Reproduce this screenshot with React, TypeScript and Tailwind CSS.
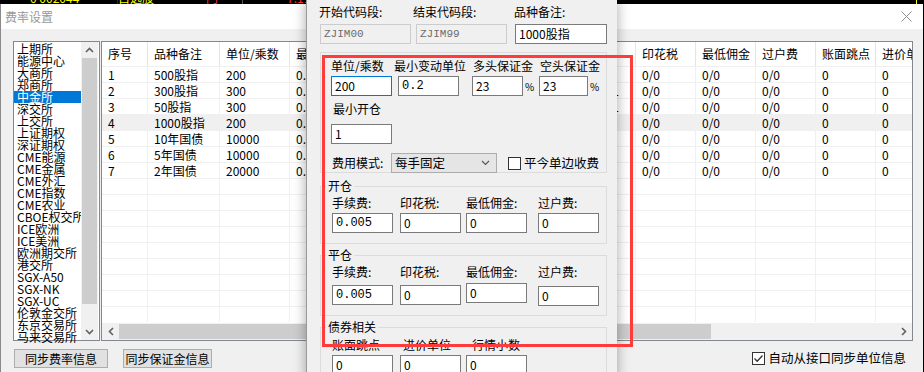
import React from 'react';

const exchanges = [
  '上期所', '能源中心', '大商所', '郑商所', '中金所', '深交所', '上交所', '上证期权', '深证期权',
  'CME能源', 'CME金属', 'CME外汇', 'CME指数', 'CME农业', 'CBOE权交所', 'ICE欧洲', 'ICE美洲',
  '欧洲期交所', '港交所', 'SGX-A50', 'SGX-NK', 'SGX-UC', '伦敦金交所', '东京交易所', '马来交易所',
];

// columns 5-8 sit under the edit dialog, only their edges show
const columns: { title: string; w: number }[] = [
  { title: '序号', w: 46 },
  { title: '品种备注', w: 72 },
  { title: '单位/乘数', w: 70 },
  { title: '最小变动', w: 60 },
  { title: '多头', w: 70 },
  { title: '空头', w: 70 },
  { title: '开仓', w: 73 },
  { title: '平仓', w: 73 },
  { title: '印花税', w: 60 },
  { title: '最低佣金', w: 60 },
  { title: '过户费', w: 60 },
  { title: '账面跳点', w: 60 },
  { title: '进价单位', w: 60 },
];

const rows: string[][] = [
  ['1', '500股指', '200', '0.2', '23%', '23%', '0.23', '0.23', '0/0', '0/0', '0/0', '0', '0'],
  ['2', '300股指', '300', '0.2', '12%', '12%', '0.23', '0.000231', '0/0', '0/0', '0/0', '0', '0'],
  ['3', '50股指', '300', '0.2', '12%', '12%', '0.23', '0.000231', '0/0', '0/0', '0/0', '0', '0'],
  ['4', '1000股指', '200', '0.2', '23%', '23%', '0.23', '0.23', '0/0', '0/0', '0/0', '0', '0'],
  ['5', '10年国债', '10000', '0.005', '2%', '2%', '3', '3', '0/0', '0/0', '0/0', '0', '0'],
  ['6', '5年国债', '10000', '0.005', '1.2%', '1.2%', '3', '3', '0/0', '0/0', '0/0', '0', '0'],
  ['7', '2年国债', '20000', '0.005', '0.5%', '0.5%', '3', '3', '0/0', '0/0', '0/0', '0', '0'],
];

const Input = ({ value, w, mono, className = '' }: { value: string; w: number; mono?: boolean; className?: string }) => (
  <div
    className={`h-[20px] bg-white border border-[#7a7a7a] pl-[3px] flex items-center text-[12px] text-black ${mono ? 'font-["Liberation_Mono","Noto_Sans_CJK_SC",monospace]' : ''} ${className}`}
    style={{ width: w }}
  >
    {value}
  </div>
);

const Group = ({ title, className, children }: { title?: string; className: string; children: React.ReactNode }) => (
  <div className={`relative ml-[1px] w-[287px] border border-[#dcdcdc] ${className}`}>
    {title && (
      <span className="absolute left-[5px] top-[-8px] px-[2px] bg-[#f0f0f0] text-[12px] leading-[14px]">{title}</span>
    )}
    {children}
  </div>
);

const FeeRow = ({ vals, offsets }: { vals: string[]; offsets: number[] }) => (
  <div className="flex items-start">
    {vals.map((v, i) => (
      <div key={i} style={{ width: i === 3 ? 61 : [68, 66, 72][i], marginTop: offsets[i] }}>
        <Input value={v} w={61} mono={v.includes('.')} />
      </div>
    ))}
  </div>
);

export default function App() {
  return (
    <div className='relative w-[924px] h-[372px] overflow-hidden bg-black font-["Noto_Sans_CJK_SC","Noto_Sans",sans-serif] text-black'>
      {/* desktop strip behind */}
      <div className="h-[4px] relative overflow-hidden text-[12px] leading-[12px]">
        <span className="absolute left-[30px] top-[-8px] text-[#ffff00]">0 002044</span>
        <span className="absolute left-[118px] top-[-8px] text-[#ffff00]">自选股</span>
        <span className="absolute left-[117px] top-0 w-px h-[4px] bg-[#8b0000]" />
        <span className="absolute left-[206px] top-[-8px] text-[#ff3030]">门</span>
        <span className="absolute left-[287px] top-[-8px] text-[#ff3030]">7.11</span>
        <span className="absolute left-[242px] top-0 w-px h-[4px] bg-[#555]" />
        <span className="absolute left-[405px] top-[-8px] text-[#00ff00]">30</span>
        <span className="absolute left-[916px] top-0 w-px h-[4px] bg-[#ffff00]" />
      </div>

      {/* main window */}
      <div className="w-[923px] h-[368px] bg-[#f0f0f0] border-l border-[#8a8a8a] flex flex-col">
        <div className="h-[25px] bg-white flex items-center justify-between pl-[4px] pr-[10px]">
          <span className="text-[12px] text-[#999999]">费率设置</span>
          <svg width="11" height="11" viewBox="0 0 11 11" className="mr-[1px]">
            <path d="M0.5 0.5 L10.5 10.5 M10.5 0.5 L0.5 10.5" stroke="#8c8c8c" strokeWidth="1" />
          </svg>
        </div>

        <div className="flex pl-[12px] pt-[12px] gap-[1px]">
          {/* exchange list */}
          <div className="w-[87px] h-[300px] border border-[#828790] bg-white flex">
            <div className="w-[67px] text-[12px] leading-[12px] pt-[1px]">
              {exchanges.map((e, i) => (
                <div
                  key={e}
                  className={`h-[12px] pl-[3px] whitespace-nowrap overflow-visible ${i === 4 ? 'bg-[#0078d7] text-white' : ''}`}
                >
                  {e}
                </div>
              ))}
            </div>
            <div className="w-[17px] bg-[#f0f0f0] flex flex-col items-center">
              <div className="h-[16px] flex items-center justify-center">
                <svg width="9" height="6" viewBox="0 0 9 6"><path d="M1 5 L4.5 1.5 L8 5" stroke="#606060" strokeWidth="1.6" fill="none" /></svg>
              </div>
              <div className="w-[15px] flex-1 bg-[#cdcdcd] mb-[20px]" />
              <div className="h-[16px] flex items-center justify-center">
                <svg width="9" height="6" viewBox="0 0 9 6"><path d="M1 1 L4.5 4.5 L8 1" stroke="#606060" strokeWidth="1.6" fill="none" /></svg>
              </div>
            </div>
          </div>

          {/* rate table */}
          <div className="w-[812px] h-[300px] border border-[#828790] bg-white flex flex-col overflow-hidden">
            <div className="flex-1 overflow-hidden text-[12px]">
              <div className="flex h-[24px]">
                {columns.map(c => (
                  <div key={c.title} className="shrink-0 pl-[6px] flex items-center border-r border-[#e5e5e5] whitespace-nowrap overflow-hidden" style={{ width: c.w }}>
                    {c.title}
                  </div>
                ))}
              </div>
              {Array.from({ length: 16 }).map((_, r) => (
                <div key={r} className={`flex h-[16px] border-t border-[#f0f0f0] ${r === 3 ? 'bg-[#f0f0f0]' : ''}`}>
                  {columns.map((c, ci) => (
                    <div key={ci} className="shrink-0 pl-[6px] leading-[15px] border-r border-[#f0f0f0] whitespace-nowrap overflow-hidden" style={{ width: c.w }}>
                      {rows[r] ? rows[r][ci] : ''}
                    </div>
                  ))}
                </div>
              ))}
            </div>
            <div className="h-[17px] bg-[#f0f0f0] flex items-center">
              <div className="w-[17px] flex justify-center">
                <svg width="6" height="9" viewBox="0 0 6 9"><path d="M5 1 L1.5 4.5 L5 8" stroke="#606060" strokeWidth="1.6" fill="none" /></svg>
              </div>
              <div className="w-[592px] h-[15px] bg-[#cdcdcd]" />
              <div className="flex-1" />
              <div className="w-[17px] flex justify-center">
                <svg width="6" height="9" viewBox="0 0 6 9"><path d="M1 1 L4.5 4.5 L1 8" stroke="#606060" strokeWidth="1.6" fill="none" /></svg>
              </div>
            </div>
          </div>
        </div>

        <div className="flex items-center pl-[13px] pr-[17px] mt-[8px] text-[12px]">
          <button className="w-[94px] h-[19px] bg-[#e1e1e1] border border-[#adadad] leading-[17px]">同步费率信息</button>
          <button className="ml-[15px] w-[89px] h-[19px] bg-[#e1e1e1] border border-[#adadad] leading-[17px]">同步保证金信息</button>
          <div className="ml-auto flex items-center gap-[3px]">
            <div className="w-[13px] h-[13px] border border-[#333] bg-white flex items-center justify-center">
              <svg width="11" height="11" viewBox="0 0 11 11"><path d="M1.5 5.5 L4.2 8.2 L9.5 2.5" stroke="#333" strokeWidth="1.3" fill="none" /></svg>
            </div>
            <span className="text-[12.5px]">自动从接口同步单位信息</span>
          </div>
        </div>
      </div>

      {/* foreground dialog */}
      <div className="absolute left-[306px] top-0 w-[311px] h-[380px] bg-[#f0f0f0] border-l border-[#9a9a9a] shadow-[0_0_12px_rgba(0,0,0,0.35)] pl-[12px] pt-[5px] text-[12px]">
        <div className="flex h-[14px] leading-[14px]">
          <span className="w-[94px]">开始代码段:</span>
          <span className="w-[101px]">结束代码段:</span>
          <span>品种备注:</span>
        </div>
        <div className="flex mt-[5px] ml-[1px]">
          <div className='w-[91px] h-[20px] border border-[#cccccc] bg-[#f0f0f0] pl-[3px] flex items-center text-[#6d6d6d] font-["Liberation_Mono",monospace] text-[11px]'>ZJIM00</div>
          <div className='ml-[5px] w-[91px] h-[20px] border border-[#cccccc] bg-[#f0f0f0] pl-[3px] flex items-center text-[#6d6d6d] font-["Liberation_Mono",monospace] text-[11px]'>ZJIM99</div>
          <Input value="1000股指" w={92} className="ml-[8px]" />
        </div>

        <Group className="mt-[8px] h-[121px] pl-[10px] pt-[6px]">
          <div className="flex h-[14px] leading-[14px] whitespace-nowrap">
            <span className="w-[63px]">单位/乘数</span>
            <span className="w-[78px]">最小变动单位</span>
            <span className="w-[67px] pl-[1px]">多头保证金</span>
            <span className="pl-[1px]">空头保证金</span>
          </div>
          <div className="flex mt-[3px] items-center">
            <div className="w-[67px]">
              <div className="w-[61px] h-[20px] bg-white border border-[#0078d7] pl-[3px] flex items-center">200</div>
            </div>
            <div className="w-[74px]"><Input value="0.2" w={61} mono /></div>
            <div className="w-[67px] flex items-center"><Input value="23" w={51} /><span className="ml-[2px] text-[10px]">%</span></div>
            <div className="flex items-center"><Input value="23" w={49} /><span className="ml-[2px] text-[10px]">%</span></div>
          </div>
          <div className="mt-[6px] pl-[2px] h-[14px] leading-[14px]">最小开仓</div>
          <Input value="1" w={61} className="mt-[8px]" />
          <div className="flex items-center mt-[9px] h-[20px]">
            <span className="w-[60px] pl-[1px]">费用模式:</span>
            <div className="w-[106px] h-[20px] bg-[#e5e5e5] border border-[#adadad] flex items-center justify-between pl-[3px] pr-[6px] text-[12.5px]">
              每手固定
              <svg width="9" height="6" viewBox="0 0 9 6"><path d="M1 1 L4.5 4.5 L8 1" stroke="#555" strokeWidth="1.1" fill="none" /></svg>
            </div>
            <div className="ml-[11px] w-[13px] h-[13px] border border-[#333] bg-white" />
            <span className="ml-[3px] text-[12.5px]">平今单边收费</span>
          </div>
        </Group>

        <Group title="开仓" className="mt-[13px] h-[58px] pl-[11px] pt-[9px]">
          <div className="flex h-[14px] leading-[14px]">
            <span className="w-[68px]">手续费:</span>
            <span className="w-[66px]">印花税:</span>
            <span className="w-[72px]">最低佣金:</span>
            <span>过户费:</span>
          </div>
          <FeeRow vals={['0.005', '0', '0', '0']} offsets={[3, 3, 3, 3]} />
        </Group>

        <Group title="平仓" className="mt-[11px] h-[61px] pl-[11px] pt-[9px]">
          <div className="flex h-[14px] leading-[14px]">
            <span className="w-[68px]">手续费:</span>
            <span className="w-[66px]">印花税:</span>
            <span className="w-[72px]">最低佣金:</span>
            <span>过户费:</span>
          </div>
          <FeeRow vals={['0.005', '0', '0', '0']} offsets={[6, 6, 4, 7]} />
        </Group>

        <Group title="债券相关" className="mt-[11px] h-[60px] pl-[11px] pt-[10px]">
          <div className="flex h-[14px] leading-[14px]">
            <span className="w-[71px]">账面跳点</span>
            <span className="w-[69px]">进价单位</span>
            <span>行情小数</span>
          </div>
          <div className="flex mt-[3px]">
            <div className="w-[68px]"><Input value="0" w={61} /></div>
            <div className="w-[66px]"><Input value="0" w={61} /></div>
            <Input value="0" w={61} />
          </div>
        </Group>
      </div>

      {/* red annotation */}
      <div className="absolute left-[322px] top-[55px] w-[311px] h-[292px] border-[3px] border-[#ff3b3b]" />
    </div>
  );
}
